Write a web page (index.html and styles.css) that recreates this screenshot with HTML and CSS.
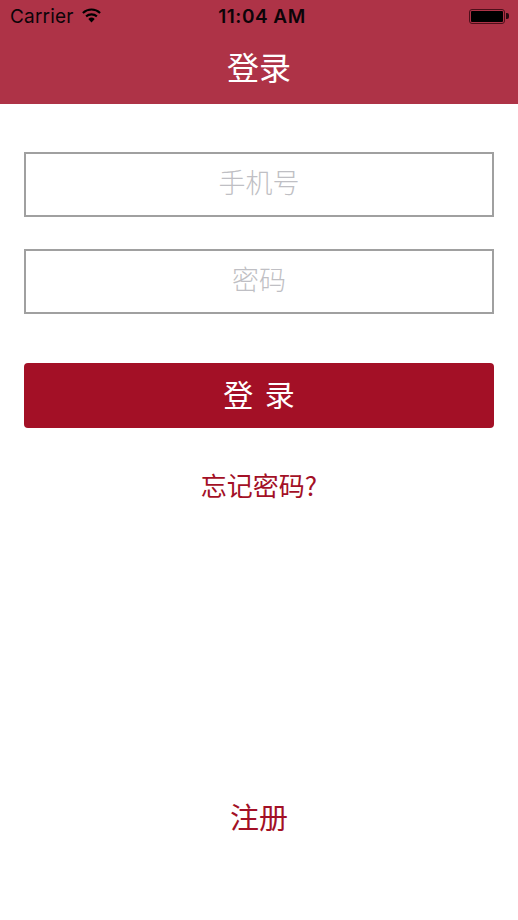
FILE: index.html
```html
<!DOCTYPE html>
<html lang="zh-CN">
<head>
  <meta charset="UTF-8" />
  <meta name="viewport" content="width=device-width, initial-scale=1.0" />
  <title>登录</title>
  <link rel="stylesheet" href="styles.css">
</head>
<body>
  <div class="app">
    <header class="header">
      <div class="status-bar">
        <div class="status-left">
          <span class="carrier">Carrier</span>
          <svg class="wifi" width="21" height="15" viewBox="0 0 20 15">
            <path d="M10 14.5 L6.8 10.9 A5 5 0 0 1 13.2 10.9 Z" fill="#000"/>
            <path d="M4.6 8.4 A8.2 8.2 0 0 1 15.4 8.4" fill="none" stroke="#000" stroke-width="2.1"/>
            <path d="M1.4 4.9 A12.6 12.6 0 0 1 18.6 4.9" fill="none" stroke="#000" stroke-width="2.1"/>
          </svg>
        </div>
        <div class="time">11:04 AM</div>
        <div class="status-right">
          <div class="battery"><div class="battery-fill"></div></div>
          <div class="battery-tip"></div>
        </div>
      </div>
      <div class="nav-title">登录</div>
    </header>

    <form class="form">
      <div class="field">手机号</div>
      <div class="field">密码</div>
      <button type="button" class="login-btn">登 录</button>
      <a class="forgot" href="#">忘记密码?</a>
    </form>

    <a class="register" href="#">注册</a>
  </div>
</body>
</html>
```

FILE: styles.css
```css
html, body {
  margin: 0;
  padding: 0;
  background: #fff;
}
body {
  font-family: "Noto Sans CJK SC", "Noto Sans", sans-serif;
}
.app {
  height: 920px;
  display: flex;
  flex-direction: column;
  overflow: hidden;
}
.header {
  height: 104px;
  background: #ae3347;
  box-sizing: border-box;
}
.status-bar {
  height: 32px;
  padding: 0 9px 0 10px;
  display: grid;
  grid-template-columns: 1fr auto 1fr;
  align-items: center;
  color: #0c0408;
  font-family: Inter, "Liberation Sans", sans-serif;
}
.status-left {
  display: flex;
  align-items: center;
  gap: 7px;
}
.carrier {
  font-size: 19px;
  letter-spacing: 0.2px;
}
.wifi {
  margin-top: -1px;
}
.time {
  margin-left: 5px;
  font-size: 19px;
  font-weight: 600;
  letter-spacing: 0.5px;
}
.status-right {
  display: flex;
  justify-content: flex-end;
  align-items: center;
}
.battery {
  width: 36px;
  height: 15px;
  box-sizing: border-box;
  border: 1px solid #4d0f1a;
  border-radius: 3px;
  padding: 1px;
}
.battery-fill {
  height: 100%;
  background: #000;
  border-radius: 1px;
}
.battery-tip {
  width: 3px;
  height: 6px;
  margin-left: 1px;
  background: #2a0a10;
  border-radius: 0 2px 2px 0;
}
.nav-title {
  color: #fff;
  font-size: 32px;
  line-height: 68px;
  text-align: center;
}
.form {
  padding: 48px 24px 0;
  display: flex;
  flex-direction: column;
}
.field {
  height: 65px;
  box-sizing: border-box;
  border: 2px solid #a0a0a0;
  padding-bottom: 6px;
  margin-bottom: 32px;
  display: flex;
  align-items: center;
  justify-content: center;
  color: #bfbfc4;
  font-size: 27px;
  font-weight: 300;
}
.login-btn {
  height: 65px;
  margin-top: 17px;
  padding: 0 0 6px;
  border: none;
  border-radius: 4px;
  background: #a31026;
  color: #fff;
  font-family: inherit;
  font-size: 30px;
  word-spacing: 5px;
}
.forgot {
  margin-top: 37px;
  text-align: center;
  color: #a31026;
  font-size: 26px;
  line-height: 40px;
  text-decoration: none;
}
.register {
  margin-top: 289px;
  text-align: center;
  color: #a31026;
  font-size: 29px;
  line-height: 44px;
  text-decoration: none;
}
```
